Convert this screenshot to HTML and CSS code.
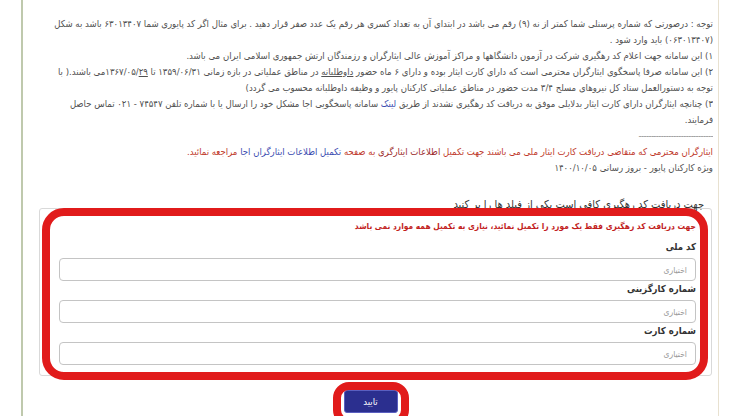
FILE: index.html
```html
<!DOCTYPE html>
<html lang="fa">
<head>
<meta charset="utf-8">
<title>کد رهگیری</title>
<link rel="stylesheet" href="styles.css">
</head>
<body>
<div class="page" dir="rtl">
  <div class="notes">
    <div class="ln">توجه : درصورتی که شماره پرسنلی شما کمتر از نه (۹) رقم می باشد در ابتدای آن به تعداد کسری هر رقم یک عدد صفر قرار دهید . برای مثال اگر کد پایوری شما ۶۳۰۱۳۴۰۷ باشد به شکل</div>
    <div class="ln">(۰۶۳۰۱۳۴۰۷) باید وارد شود .</div>
    <div class="ln">۱) این سامانه جهت اعلام کد رهگیری شرکت در آزمون دانشگاهها و مراکز آموزش عالی ایثارگران و رزمندگان ارتش جمهوری اسلامی ایران می باشد.</div>
    <div class="ln">۲) این سامانه صرفا پاسخگوی ایثارگران محترمی است که دارای کارت ایثار بوده و دارای ۶ ماه حضور <u>داوطلبانه</u> در مناطق عملیاتی در بازه زمانی ۱۳۵۹/۰۶/۳۱ تا ۱۳۶۷/۰۵/<u>۲۹</u>می باشند.( با</div>
    <div class="ln">توجه به دستورالعمل ستاد کل نیروهای مسلح ۳/۴ مدت حضور در مناطق عملیاتی کارکنان پایور و وظیفه داوطلبانه محسوب می گردد)</div>
    <div class="ln">۳) چنانچه ایثارگران دارای کارت ایثار بدلایلی موفق به دریافت کد رهگیری نشدند از طریق <span class="link">لینک</span> سامانه پاسخگویی اجا مشکل خود را ارسال یا با شماره تلفن ۷۴۵۴۷ - ۰۲۱ تماس حاصل</div>
    <div class="ln">فرمایند.</div>
    <div class="ln dashes">------------------------------</div>
    <div class="ln red">ایثارگران محترمی که متقاضی دریافت کارت ایثار ملی می باشند جهت تکمیل <span class="dark">اطلاعات ایثارگری</span> به صفحه <span class="link">تکمیل اطلاعات ایثارگران اجا</span> مراجعه نمائید.</div>
    <div class="ln">ویژه کارکنان پایور - بروز رسانی ۱۴۰۰/۱۰/۰۵</div>
  </div>
  <div class="heading">جهت دریافت کد رهگیری کافی است یکی از فیلد ها را پر کنید</div>
  <form class="panel">
    <div class="warn">جهت دریافت کد رهگیری فقط یک مورد را تکمیل نمائید، نیازی به تکمیل همه موارد نمی باشد</div>
    <label class="lbl">کد ملی</label>
    <input class="inp" type="text" placeholder="اختیاری">
    <label class="lbl">شماره کارگزینی</label>
    <input class="inp" type="text" placeholder="اختیاری">
    <label class="lbl">شماره کارت</label>
    <input class="inp" type="text" placeholder="اختیاری">
  </form>
  <div class="actions"><button class="btn" type="button">تایید</button></div>
</div>
<div class="mark mark-form"></div>
<div class="mark mark-btn"></div>
</body>
</html>
```
FILE: styles.css
```css
html, body {
  margin: 0;
  padding: 0;
  background: #ffffff;
  height: 416px;
  overflow: hidden;
}
body {
  position: relative;
  font-family: "DejaVu Sans Condensed", "DejaVu Sans", sans-serif;
}
.page {
  direction: rtl;
  margin-left: 21px;
  width: 695px;
  min-height: 416px;
  border-left: 2px solid #bfc9ad;
  border-right: 1px solid #e8e1d0;
  box-sizing: content-box;
  padding-top: 16px;
}
.notes {
  padding-right: 5px;
  color: #505050;
  font-size: 9.5px;
}
.ln {
  line-height: 16px;
  height: 16px;
  white-space: nowrap;
  overflow: hidden;
  text-align: right;
}
.dashes {
  color: #888;
  letter-spacing: -0.6px;
}
.red { color: #c0392b; }
.red .dark { color: #9b2a2a; }
.link { color: #3b4cb0; }
.heading {
  margin-top: 20px;
  padding-right: 14px;
  font-size: 11px;
  line-height: 17px;
  height: 17px;
  color: #333;
  white-space: nowrap;
  overflow: hidden;
}
.panel {
  margin: -5px 6px 0 16px;
  border: 1px solid #d9d9d9;
  border-radius: 3px;
  padding: 9px 15px 10px 19px;
  display: flex;
  flex-direction: column;
  align-items: stretch;
}
.warn {
  color: #c21e1e;
  font-weight: bold;
  font-size: 8.4px;
  line-height: 16px;
  margin-bottom: 5px;
  white-space: nowrap;
}
.lbl {
  font-weight: bold;
  font-size: 9.5px;
  line-height: 16px;
  color: #333;
  margin-bottom: 3px;
}
.inp {
  height: 23px;
  box-sizing: border-box;
  border: 1px solid #c4c4c4;
  border-radius: 4px;
  padding: 0 8px;
  font-family: "DejaVu Sans Condensed", "DejaVu Sans", sans-serif;
  font-size: 8.5px;
  direction: rtl;
  background: #fff;
  width: 100%;
}
.inp::placeholder { color: #9a9a9a; }
.actions {
  display: flex;
  justify-content: center;
  margin-top: 14px;
}
.btn {
  width: 54px;
  height: 23px;
  background: #2b2f8f;
  border: 1px solid #5a5fc0;
  border-radius: 3px;
  color: #fff;
  font-family: "DejaVu Sans Condensed", "DejaVu Sans", sans-serif;
  font-size: 9.5px;
  padding: 0;
}
.mark {
  position: absolute;
  border: 8px solid #e11b1b;
  box-sizing: border-box;
}
.mark-form {
  left: 42px;
  top: 208px;
  width: 666px;
  height: 172px;
  border-radius: 22px;
}
.mark-btn {
  left: 333px;
  top: 382px;
  width: 76px;
  height: 44px;
  border-radius: 16px;
}
```
